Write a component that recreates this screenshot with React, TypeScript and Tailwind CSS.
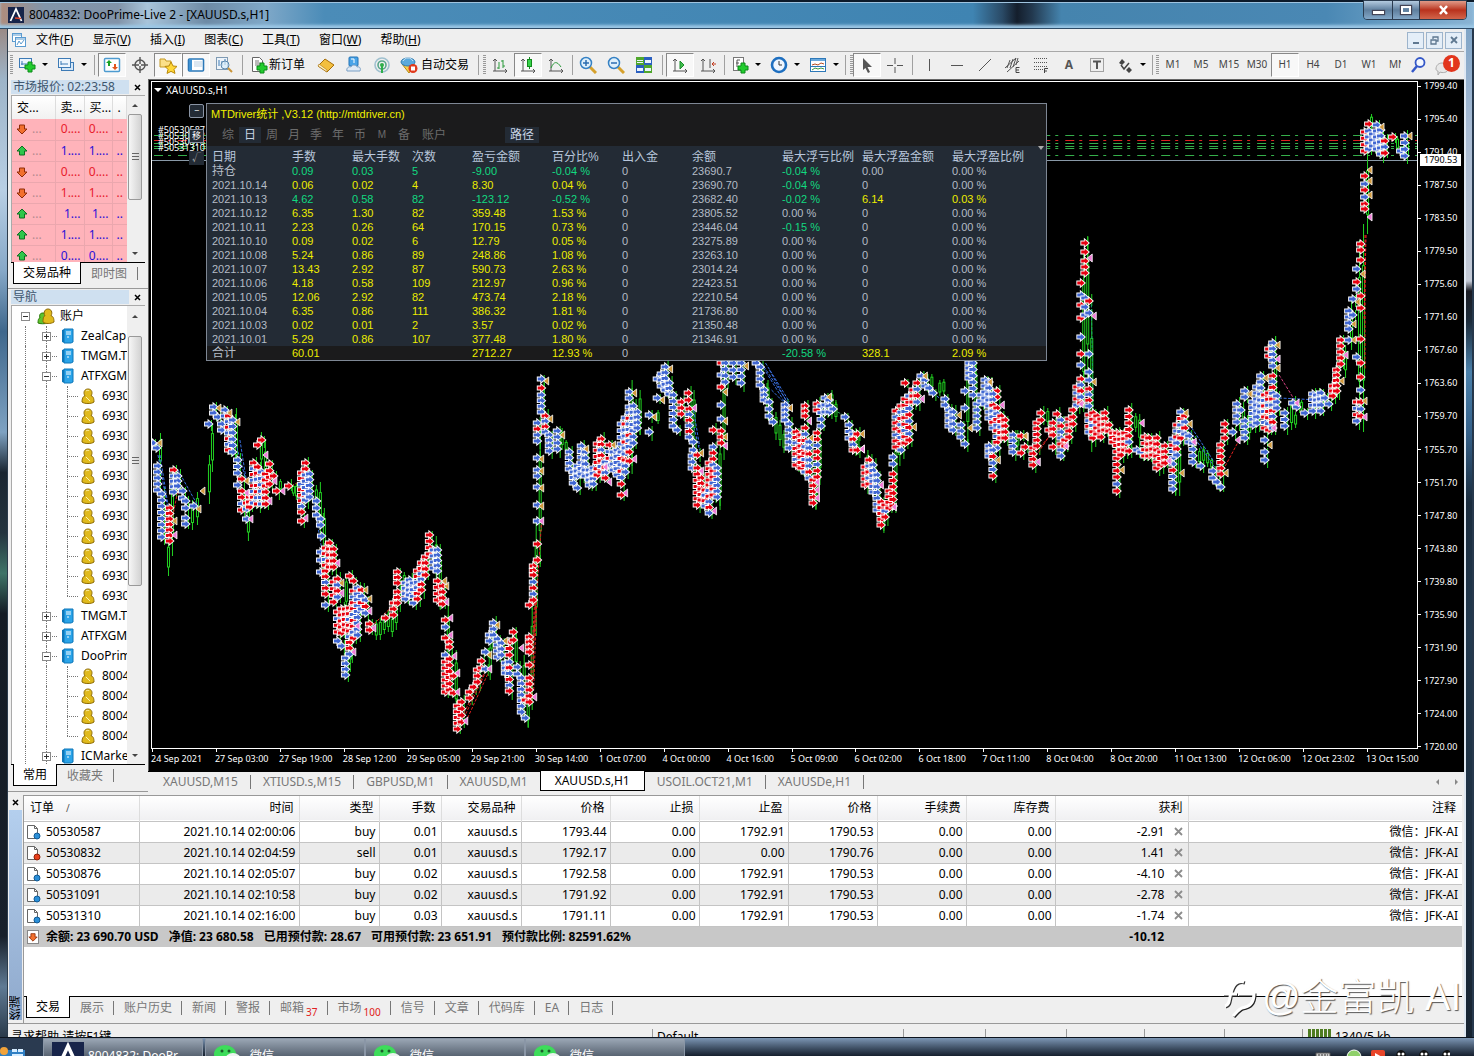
import type { ReactNode } from "react";
import clsx from "clsx";

const UI = "font-['Noto_Sans','Noto_Sans_CJK_SC',sans-serif]";
const ARIAL = "font-['Liberation_Sans','Noto_Sans_CJK_SC',sans-serif]";

/* ---------- data ---------- */

const menus = [
  ["文件", "F"],
  ["显示", "V"],
  ["插入", "I"],
  ["图表", "C"],
  ["工具", "T"],
  ["窗口", "W"],
  ["帮助", "H"],
];

const periods = ["M1", "M5", "M15", "M30", "H1", "H4", "D1", "W1"];

const quotes = [
  { up: false, v: "0....", c: "text-[#e8202c]" },
  { up: true, v: "1....", c: "text-[#2a10d8]" },
  { up: false, v: "0....", c: "text-[#e8202c]" },
  { up: false, v: "1....", c: "text-[#e8202c]" },
  { up: true, v: "1...", c: "text-[#2a10d8]" },
  { up: true, v: "1....", c: "text-[#2a10d8]" },
  { up: true, v: "0....", c: "text-[#2a10d8]" },
];

type Node = { level: 0 | 1 | 2; label: string; open?: boolean; last?: boolean };
const accounts = (label: string, n: number): Node[] =>
  Array.from({ length: n }, (_, i) => ({ level: 2, label, last: i === n - 1 }));

const tree: Node[] = [
  { level: 0, label: "账户", open: true },
  { level: 1, label: "ZealCap" },
  { level: 1, label: "TMGM.T" },
  { level: 1, label: "ATFXGM", open: true },
  ...accounts("6930", 11),
  { level: 1, label: "TMGM.T" },
  { level: 1, label: "ATFXGM" },
  { level: 1, label: "DooPrim", open: true },
  ...accounts("8004", 4),
  { level: 1, label: "ICMarke" },
];

const prices = [
  "1799.40", "1795.40", "1791.40", "1787.50", "1783.50", "1779.50", "1775.60",
  "1771.60", "1767.60", "1763.60", "1759.70", "1755.70", "1751.70", "1747.80",
  "1743.80", "1739.80", "1735.90", "1731.90", "1727.90", "1724.00", "1720.00",
];

const dates = [
  "24 Sep 2021", "27 Sep 03:00", "27 Sep 19:00", "28 Sep 12:00", "29 Sep 05:00",
  "29 Sep 21:00", "30 Sep 14:00", "1 Oct 07:00", "4 Oct 00:00", "4 Oct 16:00",
  "5 Oct 09:00", "6 Oct 02:00", "6 Oct 18:00", "7 Oct 11:00", "8 Oct 04:00",
  "8 Oct 20:00", "11 Oct 13:00", "12 Oct 06:00", "12 Oct 23:02", "13 Oct 15:00",
];

const chartTabs = [
  "XAUUSD,M15", "XTIUSD.s,M15", "GBPUSD,M1", "XAUUSD,M1", "XAUUSD.s,H1", "USOIL.OCT21,M1", "XAUUSDe,H1",
];

const statHead = ["日期", "手数", "最大手数", "次数", "盈亏金额", "百分比%", "出入金", "余额", "最大浮亏比例", "最大浮盈金额", "最大浮盈比例"];
const statRows = [
  ["持仓", "0.09", "0.03", "5", "-9.00", "-0.04 %", "0", "23690.7", "-0.04 %", "0.00", "0.00 %"],
  ["2021.10.14", "0.06", "0.02", "4", "8.30", "0.04 %", "0", "23690.70", "-0.04 %", "0", "0.00 %"],
  ["2021.10.13", "4.62", "0.58", "82", "-123.12", "-0.52 %", "0", "23682.40", "-0.02 %", "6.14", "0.03 %"],
  ["2021.10.12", "6.35", "1.30", "82", "359.48", "1.53 %", "0", "23805.52", "0.00 %", "0", "0.00 %"],
  ["2021.10.11", "2.23", "0.26", "64", "170.15", "0.73 %", "0", "23446.04", "-0.15 %", "0", "0.00 %"],
  ["2021.10.10", "0.09", "0.02", "6", "12.79", "0.05 %", "0", "23275.89", "0.00 %", "0", "0.00 %"],
  ["2021.10.08", "5.24", "0.86", "89", "248.86", "1.08 %", "0", "23263.10", "0.00 %", "0", "0.00 %"],
  ["2021.10.07", "13.43", "2.92", "87", "590.73", "2.63 %", "0", "23014.24", "0.00 %", "0", "0.00 %"],
  ["2021.10.06", "4.18", "0.58", "109", "212.97", "0.96 %", "0", "22423.51", "0.00 %", "0", "0.00 %"],
  ["2021.10.05", "12.06", "2.92", "82", "473.74", "2.18 %", "0", "22210.54", "0.00 %", "0", "0.00 %"],
  ["2021.10.04", "6.35", "0.86", "111", "386.32", "1.81 %", "0", "21736.80", "0.00 %", "0", "0.00 %"],
  ["2021.10.03", "0.02", "0.01", "2", "3.57", "0.02 %", "0", "21350.48", "0.00 %", "0", "0.00 %"],
  ["2021.10.01", "5.29", "0.86", "107", "377.48", "1.80 %", "0", "21346.91", "0.00 %", "0", "0.00 %"],
];
const statTotal = ["合计", "60.01", "", "", "2712.27", "12.93 %", "0", "", "-20.58 %", "328.1", "2.09 %"];

const orderHead = ["时间", "类型", "手数", "交易品种", "价格", "止损", "止盈", "价格", "手续费", "库存费"];
const orders = [
  ["50530587", "2021.10.14 02:00:06", "buy", "0.01", "xauusd.s", "1793.44", "0.00", "1792.91", "1790.53", "0.00", "0.00", "-2.91"],
  ["50530832", "2021.10.14 02:04:59", "sell", "0.01", "xauusd.s", "1792.17", "0.00", "0.00", "1790.76", "0.00", "0.00", "1.41"],
  ["50530876", "2021.10.14 02:05:07", "buy", "0.02", "xauusd.s", "1792.58", "0.00", "1792.91", "1790.53", "0.00", "0.00", "-4.10"],
  ["50531091", "2021.10.14 02:10:58", "buy", "0.02", "xauusd.s", "1791.92", "0.00", "1792.91", "1790.53", "0.00", "0.00", "-2.78"],
  ["50531310", "2021.10.14 02:16:00", "buy", "0.03", "xauusd.s", "1791.11", "0.00", "1792.91", "1790.53", "0.00", "0.00", "-1.74"],
];

const terminalTabs: [string, string?][] = [
  ["交易"], ["展示"], ["账户历史"], ["新闻"], ["警报"], ["邮箱", "37"], ["市场", "100"],
  ["信号"], ["文章"], ["代码库"], ["EA"], ["日志"],
];

/* Order arrows: x, first y, last y, colours cycled down the column. */
type Col = [number, number, number, string];
const cols: Col[] = [
  [153, 443, 443, "b"], [157, 448, 448, "b"], [158, 466, 490, "b"], [162, 494, 537, "b"], [170, 508, 541, "r"],
  [174, 470, 470, "r"], [174, 476, 492, "b"], [178, 476, 486, "b"], [183, 491, 498, "b"], [186, 501, 508, "b"],
  [186, 518, 524, "b"], [194, 506, 506, "b"], [209, 424, 424, "b"], [214, 407, 413, "b"], [218, 417, 417, "b"],
  [222, 424, 430, "b"], [225, 410, 416, "b"], [229, 416, 450, "rb"], [233, 420, 452, "b"], [238, 460, 473, "b"],
  [238, 485, 485, "b"], [242, 479, 479, "r"], [242, 491, 510, "rrb"], [247, 503, 509, "rb"], [247, 519, 519, "b"],
  [250, 497, 507, "r"], [254, 463, 503, "rb"], [258, 445, 445, "r"], [262, 440, 440, "r"], [258, 467, 504, "rrb"],
  [262, 472, 504, "b"], [266, 474, 504, "rrr"], [270, 464, 484, "r"], [274, 476, 476, "r"], [277, 491, 491, "r"],
  [289, 486, 486, "r"], [302, 473, 512, "rrbr"], [302, 521, 521, "r"], [306, 463, 469, "r"], [306, 475, 500, "b"],
  [310, 474, 497, "b"], [317, 501, 515, "b"], [321, 519, 525, "b"], [322, 536, 536, "b"], [321, 552, 560, "b"],
  [321, 572, 572, "b"], [326, 548, 594, "rrbr"], [326, 605, 605, "b"], [330, 543, 567, "r"], [334, 549, 567, "r"],
  [334, 582, 602, "r"], [338, 579, 597, "rb"], [338, 612, 632, "rbr"], [338, 641, 641, "b"], [342, 646, 646, "b"],
  [342, 609, 633, "r"], [346, 609, 630, "r"], [346, 658, 675, "b"], [350, 576, 576, "r"], [350, 608, 654, "rrb"],
  [354, 581, 581, "r"], [354, 591, 638, "rbr"], [358, 588, 635, "b"], [362, 590, 609, "rb"], [366, 600, 613, "br"],
  [370, 624, 630, "r"], [386, 618, 618, "r"], [394, 603, 615, "r"], [398, 572, 583, "r"], [398, 592, 603, "r"],
  [406, 583, 599, "b"], [410, 580, 595, "b"], [414, 583, 603, "b"], [418, 571, 599, "rrbb"], [422, 563, 590, "rrbb"],
  [426, 557, 575, "r"], [430, 535, 554, "r"], [434, 550, 568, "b"], [438, 550, 571, "b"], [438, 581, 600, "r"],
  [443, 586, 604, "r"], [446, 620, 620, "r"], [446, 627, 627, "b"], [446, 638, 638, "r"], [450, 642, 647, "r"],
  [446, 655, 655, "b"], [446, 662, 692, "r"], [450, 659, 690, "rr"], [454, 676, 676, "r"], [454, 693, 693, "r"],
  [458, 706, 729, "r"], [462, 702, 722, "r"], [470, 692, 698, "r"], [474, 687, 687, "r"], [478, 670, 682, "r"],
  [482, 661, 668, "r"], [486, 652, 652, "b"], [486, 669, 669, "b"], [490, 635, 641, "b"], [494, 623, 635, "b"],
  [498, 639, 657, "b"], [502, 643, 655, "b"], [510, 642, 655, "r"], [506, 663, 673, "b"], [510, 662, 691, "br"],
  [514, 632, 640, "r"], [518, 667, 674, "b"], [522, 678, 712, "b"], [526, 700, 700, "r"], [526, 718, 718, "b"],
  [530, 605, 605, "r"], [530, 637, 652, "r"], [530, 665, 665, "r"], [530, 678, 702, "r"], [534, 566, 575, "r"],
  [534, 582, 600, "br"], [538, 544, 544, "r"], [538, 560, 560, "r"], [538, 423, 441, "brb"], [538, 458, 458, "b"],
  [538, 470, 476, "b"], [538, 487, 487, "b"], [538, 505, 505, "b"], [538, 521, 521, "b"], [542, 379, 379, "b"],
  [542, 388, 388, "r"], [542, 395, 412, "b"], [546, 416, 432, "rb"], [550, 435, 451, "b"], [558, 431, 449, "b"],
  [570, 452, 469, "b"], [574, 472, 483, "b"], [578, 488, 488, "b"], [578, 466, 476, "b"], [582, 446, 474, "b"],
  [586, 452, 476, "b"], [590, 470, 485, "b"], [594, 468, 484, "b"], [598, 444, 475, "r"], [602, 439, 472, "rrb"],
  [606, 462, 478, "br"], [610, 445, 465, "rb"], [614, 452, 470, "b"], [618, 450, 475, "b"], [622, 424, 444, "b"],
  [622, 452, 484, "br"], [622, 495, 495, "r"], [626, 418, 472, "brb"], [630, 392, 398, "b"], [630, 407, 452, "bbr"],
  [630, 461, 461, "r"], [634, 406, 443, "b"], [638, 412, 428, "b"], [650, 415, 415, "b"], [650, 432, 432, "b"],
  [658, 379, 379, "b"], [658, 398, 398, "b"], [662, 374, 386, "b"], [666, 367, 390, "b"], [670, 383, 394, "b"],
  [674, 395, 426, "b"], [678, 430, 430, "b"], [682, 402, 414, "r"], [689, 393, 400, "r"], [690, 409, 437, "rb"],
  [694, 442, 450, "b"], [693, 456, 468, "b"], [698, 455, 455, "r"], [698, 468, 505, "rrr"], [702, 478, 500, "r"],
  [706, 490, 506, "rb"], [710, 485, 513, "rb"], [710, 463, 480, "r"], [714, 447, 495, "brr"], [718, 468, 497, "b"],
  [714, 430, 430, "r"], [722, 363, 363, "r"], [722, 375, 375, "b"], [722, 387, 387, "r"], [722, 405, 405, "b"],
  [722, 419, 419, "b"], [722, 431, 443, "r"], [726, 363, 382, "b"], [734, 363, 377, "b"], [742, 363, 383, "b"],
  [757, 363, 363, "b"], [761, 367, 385, "b"], [765, 390, 400, "b"], [770, 402, 416, "b"], [774, 422, 422, "b"],
  [786, 405, 420, "b"], [790, 424, 448, "b"], [797, 432, 465, "rrb"], [802, 435, 468, "r"], [806, 406, 416, "r"],
  [806, 428, 472, "rb"], [810, 442, 478, "bbr"], [814, 480, 503, "r"], [818, 433, 477, "rrb"], [818, 404, 410, "r"],
  [822, 406, 426, "b"], [826, 398, 412, "b"], [830, 400, 412, "b"], [834, 409, 409, "b"], [846, 417, 417, "b"],
  [850, 425, 438, "b"], [854, 434, 450, "br"], [858, 434, 434, "r"], [858, 450, 450, "r"], [866, 467, 485, "r"],
  [870, 460, 484, "rb"], [874, 465, 492, "b"], [878, 475, 510, "b"], [882, 502, 525, "r"], [886, 505, 517, "rb"],
  [890, 491, 508, "r"], [894, 457, 464, "b"], [894, 474, 506, "r"], [897, 411, 447, "rbr"], [902, 406, 450, "rb"],
  [906, 383, 383, "r"], [906, 399, 443, "rrb"], [910, 396, 440, "br"], [914, 390, 402, "r"], [918, 383, 402, "rb"],
  [922, 376, 376, "b"], [926, 380, 386, "b"], [930, 388, 388, "b"], [934, 393, 393, "b"], [946, 399, 405, "b"],
  [950, 410, 426, "b"], [954, 412, 430, "b"], [962, 425, 437, "b"], [966, 444, 444, "b"], [966, 391, 391, "b"],
  [966, 408, 408, "b"], [970, 363, 378, "b"], [974, 363, 395, "b"], [978, 404, 428, "b"], [982, 395, 401, "b"],
  [986, 380, 404, "b"], [990, 382, 418, "b"], [998, 391, 397, "r"], [994, 394, 428, "bbr"], [998, 408, 448, "rb"],
  [1002, 416, 438, "rrb"], [990, 446, 456, "b"], [994, 450, 476, "brb"], [1006, 420, 438, "r"], [1014, 435, 452, "b"],
  [1022, 436, 436, "r"], [1026, 447, 447, "r"], [1022, 453, 453, "r"], [1034, 448, 465, "r"], [1038, 423, 446, "r"],
  [1042, 413, 420, "r"], [1050, 430, 430, "r"], [1054, 423, 435, "r"], [1054, 447, 447, "r"], [1058, 414, 414, "r"],
  [1062, 420, 456, "brb"], [1066, 440, 446, "r"], [1070, 419, 437, "r"], [1074, 410, 424, "r"], [1078, 387, 405, "rb"],
  [1082, 379, 403, "rb"], [1086, 243, 243, "r"], [1086, 252, 252, "r"], [1086, 261, 273, "r"], [1082, 283, 283, "r"],
  [1082, 295, 295, "b"], [1082, 305, 305, "r"], [1082, 318, 318, "r"], [1086, 298, 298, "b"], [1086, 307, 315, "b"],
  [1090, 301, 301, "r"], [1090, 313, 313, "b"], [1082, 337, 337, "b"], [1082, 354, 354, "r"], [1082, 365, 365, "b"],
  [1090, 354, 354, "b"], [1090, 372, 380, "b"], [1090, 389, 406, "rb"], [1090, 415, 432, "rb"], [1094, 413, 438, "rrb"],
  [1098, 416, 434, "r"], [1102, 419, 437, "r"], [1106, 413, 430, "r"], [1110, 425, 431, "r"], [1114, 433, 442, "r"],
  [1118, 433, 477, "r"], [1118, 484, 484, "b"], [1118, 491, 491, "r"], [1122, 434, 455, "r"], [1126, 433, 450, "r"],
  [1130, 410, 436, "r"], [1130, 442, 442, "b"], [1130, 451, 451, "r"], [1138, 450, 450, "b"], [1142, 452, 452, "b"],
  [1146, 437, 456, "r"], [1150, 438, 456, "r"], [1154, 443, 455, "r"], [1158, 438, 468, "r"], [1162, 452, 465, "r"],
  [1166, 446, 463, "r"], [1174, 439, 489, "brbb"], [1178, 425, 455, "rb"], [1182, 412, 438, "brb"], [1186, 416, 434, "rb"],
  [1190, 436, 442, "b"], [1194, 443, 462, "b"], [1202, 466, 466, "b"], [1214, 471, 478, "b"], [1218, 482, 482, "b"],
  [1222, 487, 487, "b"], [1222, 445, 474, "r"], [1226, 424, 438, "r"], [1234, 432, 432, "b"], [1238, 404, 422, "b"],
  [1242, 410, 410, "b"], [1246, 391, 397, "b"], [1246, 421, 438, "b"], [1254, 402, 425, "b"], [1258, 387, 423, "b"],
  [1262, 376, 412, "b"], [1266, 395, 428, "rb"], [1266, 440, 440, "b"], [1266, 452, 460, "b"], [1270, 349, 356, "r"],
  [1270, 393, 430, "rrb"], [1274, 343, 366, "b"], [1274, 376, 428, "rb"], [1278, 396, 408, "b"], [1286, 413, 426, "b"],
  [1294, 403, 403, "b"], [1298, 407, 407, "b"], [1306, 413, 413, "b"], [1314, 394, 411, "b"], [1318, 395, 405, "b"],
  [1322, 393, 411, "b"], [1326, 398, 398, "b"], [1330, 404, 404, "b"], [1334, 386, 396, "r"], [1338, 370, 391, "r"],
  [1342, 340, 364, "r"], [1350, 311, 329, "b"], [1350, 340, 340, "b"], [1354, 299, 299, "b"], [1354, 315, 315, "b"],
  [1358, 269, 269, "b"], [1358, 282, 282, "r"], [1358, 289, 289, "b"], [1358, 357, 357, "b"], [1358, 402, 421, "rb"],
  [1362, 244, 250, "r"], [1362, 260, 260, "r"], [1362, 296, 296, "r"], [1362, 308, 308, "r"], [1362, 339, 339, "r"],
  [1362, 363, 363, "r"], [1362, 377, 377, "r"], [1362, 390, 390, "b"], [1362, 402, 416, "rb"], [1366, 132, 151, "r"],
  [1366, 176, 176, "r"], [1366, 184, 184, "b"], [1366, 190, 190, "r"], [1366, 197, 197, "b"], [1366, 204, 209, "r"],
  [1370, 124, 124, "r"], [1370, 131, 149, "b"], [1374, 134, 146, "b"], [1378, 125, 149, "b"], [1382, 130, 154, "b"],
  [1386, 141, 153, "rb"], [1394, 137, 137, "r"], [1402, 151, 151, "b"], [1406, 136, 156, "b"],
];

/* Exit marks pointing left: gold, then pink. */
const goldExits = [
  [160, 443], [175, 521], [203, 491], [199, 509], [219, 408], [230, 413], [238, 422], [247, 481], [342, 583], [366, 590],
  [370, 599], [447, 586], [445, 581], [498, 625], [490, 655], [506, 641], [547, 381], [551, 419], [542, 459], [542, 471],
  [542, 488], [542, 506], [563, 435], [587, 449], [614, 445], [635, 393], [655, 417], [663, 400], [671, 369], [702, 453],
  [726, 392], [726, 421], [726, 437], [747, 366], [791, 408], [812, 438], [830, 397], [863, 434], [863, 449], [926, 376],
  [915, 427], [960, 415], [971, 428], [991, 382], [999, 460], [1027, 437], [1026, 436], [1095, 382], [1123, 470], [1187, 413],
  [1191, 424], [1183, 473], [1227, 473], [1251, 394], [1267, 378], [1271, 445], [1279, 345], [1279, 368], [1343, 381],
  [1355, 340], [1355, 324], [1366, 401], [1364, 274], [1359, 302], [1371, 170], [1371, 181], [1371, 195], [1383, 127],
  [1411, 136],
];
const pinkExits = [
  [175, 535], [247, 493], [251, 519], [266, 455], [275, 481], [270, 501], [283, 491], [306, 518], [338, 563], [342, 593],
  [354, 652], [358, 626], [370, 611], [374, 628], [447, 602], [451, 618], [451, 635], [455, 656], [458, 673], [458, 692],
  [466, 721], [490, 669], [522, 648], [535, 697], [542, 521], [610, 482], [626, 493], [606, 467], [635, 459], [695, 408],
  [702, 471], [715, 511], [726, 446], [810, 421], [818, 482], [818, 490], [818, 498], [863, 449], [882, 485], [895, 507],
  [923, 399], [1003, 405], [1039, 462], [1067, 446], [1091, 258], [1095, 316], [1082, 404], [1143, 423], [1170, 461],
  [1195, 442], [1239, 440], [1275, 428], [1279, 359], [1298, 403], [1347, 355], [1366, 417], [1371, 217],
];

/* Long bars that show between the arrows: x, high, low. */
const wicks = [
  [160, 433, 470], [168, 540, 576], [172, 470, 556], [192, 500, 530], [197, 492, 525], [209, 455, 504], [212, 424, 472],
  [236, 408, 470], [248, 505, 541], [261, 432, 468], [265, 440, 500], [280, 479, 492], [293, 484, 496], [296, 483, 500],
  [316, 485, 510], [320, 482, 535], [324, 508, 560], [346, 575, 610], [350, 620, 672], [376, 620, 640], [380, 618, 640],
  [384, 616, 634], [388, 610, 632], [392, 615, 637], [396, 600, 630], [404, 572, 590], [436, 536, 580], [440, 548, 610],
  [448, 600, 690], [456, 650, 715], [490, 640, 680], [516, 630, 672], [524, 655, 708], [528, 695, 728], [532, 608, 700],
  [536, 520, 636], [540, 430, 564], [562, 428, 450], [566, 440, 452], [632, 380, 474], [640, 390, 435], [658, 410, 424],
  [694, 390, 440], [720, 440, 510], [724, 360, 460], [768, 380, 420], [776, 412, 440], [780, 420, 446], [784, 430, 453],
  [816, 450, 509], [820, 430, 480], [832, 390, 415], [836, 400, 422], [858, 430, 455], [868, 450, 480], [884, 500, 531],
  [896, 440, 495], [900, 420, 466], [932, 374, 390], [940, 380, 396], [944, 379, 395], [968, 360, 442], [976, 360, 430],
  [1018, 430, 450], [1048, 408, 426], [1084, 250, 412], [1088, 236, 380], [1092, 310, 452], [1130, 406, 450],
  [1136, 413, 432], [1140, 414, 445], [1176, 440, 496], [1180, 440, 496], [1200, 448, 466], [1204, 446, 465],
  [1208, 450, 467], [1212, 458, 470], [1244, 402, 440], [1250, 410, 440], [1276, 336, 430], [1292, 400, 430],
  [1296, 412, 428], [1302, 400, 412], [1338, 360, 398], [1346, 345, 378], [1352, 300, 350], [1360, 240, 428],
  [1364, 224, 432], [1368, 155, 234], [1372, 114, 130], [1398, 136, 152], [1408, 140, 161],
];

/* Dotted trade paths: from, to, colour. */
const paths: [number, number, number, number, string][] = [
  [158, 455, 170, 520, "#3a6fe0"], [160, 455, 168, 505, "#3a6fe0"], [170, 530, 178, 490, "#e02020"],
  [178, 470, 198, 506, "#3a6fe0"], [232, 430, 246, 480, "#3a6fe0"], [240, 440, 246, 478, "#3a6fe0"],
  [302, 480, 288, 488, "#e02020"], [312, 490, 322, 550, "#3a6fe0"], [374, 624, 396, 603, "#e02020"],
  [386, 618, 426, 570, "#e02020"], [458, 725, 486, 670, "#e02020"], [464, 718, 486, 672, "#e02020"],
  [466, 722, 488, 674, "#e02020"], [530, 700, 535, 600, "#e02020"], [532, 700, 536, 600, "#e02020"],
  [534, 690, 537, 600, "#e02020"], [534, 640, 542, 520, "#e02020"],
  [762, 363, 790, 405, "#3a6fe0"], [766, 363, 790, 402, "#3a6fe0"], [770, 370, 790, 407, "#3a6fe0"],
  [764, 368, 790, 410, "#3a6fe0"], [772, 390, 788, 406, "#3a6fe0"],
  [690, 410, 700, 450, "#3a6fe0"], [694, 410, 700, 446, "#3a6fe0"], [834, 410, 848, 417, "#2fa060"],
  [934, 393, 960, 415, "#3a6fe0"], [1034, 460, 1054, 430, "#e02020"], [1038, 450, 1056, 430, "#e02020"],
  [1092, 300, 1094, 410, "#1aa070"], [1190, 424, 1215, 462, "#3a6fe0"], [1186, 424, 1216, 468, "#3a6fe0"],
  [1224, 470, 1240, 440, "#e02020"], [1280, 375, 1298, 404, "#d04080"], [1280, 398, 1320, 400, "#3a6fe0"],
  [1366, 235, 1366, 370, "#f02020"], [1367, 235, 1365, 320, "#f02020"],
];

const levels: [number, string][] = [
  [135, "#35b04a"], [140, "#e02020"], [143, "#35b04a"], [146, "#35b04a"], [148, "#35b04a"], [155, "#35b04a"],
];

/* ---------- icons ---------- */

function Icon({ children, size = 18 }: { children: ReactNode; size?: number }) {
  return (
    <svg width={size} height={size} viewBox="0 0 18 18" fill="none" aria-hidden="true" className="shrink-0">
      {children}
    </svg>
  );
}

const Plus = ({ x = 11, y = 11 }) => (
  <path d={`M${x - 2} ${y - 5}h4v3h3v4h-3v3h-4v-3h-3v-4h3z`} fill="#22cc2e" stroke="#0b8a18" />
);
const Axes = () => <path d="M4 3v12M2 15h14M2 5l2-2 2 2M14 13l2 2-2 2" stroke="#555" />;

const icons = {
  newChart: <><rect x="1.500" y="2.500" width="12" height="9" fill="#eaf4fd" stroke="#3d7ab5" /><path d="M4 5v4M3 8h8" stroke="#3d7ab5" /><Plus x={12} /></>,
  profiles: <><rect x="4.500" y="6.500" width="12" height="8" fill="#d5e7f7" stroke="#3d7ab5" /><rect x="1.500" y="2.500" width="12" height="9" fill="#eef6fd" stroke="#3d7ab5" /><path d="M4 5v4M4 8h7" stroke="#3d7ab5" /></>,
  market: <><rect x="1.500" y="2.500" width="15" height="13" rx="1" fill="#fff" stroke="#4d9bd0" strokeWidth="1.500" /><path d="M6 4l3 3H7v3H5V7H3z" fill="#17a326" /><path d="M12 14l-3-3h2V8h2v3h2z" fill="#e2541b" /></>,
  crosshair: <><circle cx="9" cy="9" r="5" stroke="#555" strokeWidth="1.400" /><path d="M9 1v7M9 10v7M1 9h7M10 9h7" stroke="#555" strokeWidth="1.400" /></>,
  navigator: <><path d="M1 3h5l1 2h5v6H1z" fill="#fbe08a" stroke="#c59a24" /><path d="M12 6l2 4 4 .4-3 3 1 4-4-2-4 2 1-4-3-3 4-.4z" fill="#ffd83a" stroke="#b98708" /></>,
  terminal: <><rect x="1.500" y="3" width="15" height="12" rx="1" fill="#fff" stroke="#2b78b8" strokeWidth="1.600" /><path d="M2 3h3v12H2z" fill="#3f92d2" /><path d="M7 6h8M7 8h8M7 10h8" stroke="#b9cfe2" /></>,
  tester: <><rect x="1.500" y="1.500" width="11" height="12" fill="#eef4fa" stroke="#7f9ab3" /><path d="M4 4v6M7 5v5M10 3v6" stroke="#3d7ab5" /><circle cx="10" cy="9" r="4" fill="#d9ecfa" fillOpacity=".7" stroke="#5a87ad" /><path d="M13 12l4 4" stroke="#c99437" strokeWidth="2" /></>,
  order: <><path d="M2.500 1.500h7l3 3v11h-10z" fill="#fff" stroke="#666" /><path d="M5 5h4M5 7h5M5 9h5" stroke="#777" /><Plus x={12} y={12} /></>,
  editor: <><path d="M1 10l7-7 9 6-7 7z" fill="#f3bf3e" stroke="#a66e0a" /><path d="M1 10l9 6v-2L2 8z" fill="#fff3c9" stroke="#a66e0a" strokeWidth=".6" /></>,
  vps: <><rect x="4" y="1" width="9" height="9" rx="1" fill="#49a4e8" stroke="#2272b5" /><path d="M6 3h3v4" stroke="#fff" /><path d="M2 15c-1-3 2-5 4-4 1-3 6-2 6 0 3-1 4 2 3 4z" fill="#dfeaf5" stroke="#7aa0c5" /></>,
  signals: <><circle cx="9" cy="9" r="7" stroke="#9fc0cf" strokeWidth="1.600" /><circle cx="9" cy="9" r="4" stroke="#58a58b" strokeWidth="1.600" /><circle cx="9" cy="9" r="2" fill="#2fae4a" /><path d="M9 9v8" stroke="#2fae4a" strokeWidth="2" /></>,
  auto: <><path d="M2 8l7 9 6-8z" fill="#f6cf4b" stroke="#b48712" /><ellipse cx="8" cy="6" rx="7" ry="4" fill="#5aa9dc" stroke="#2f7bb0" /><path d="M3 5c2-4 8-4 10 0" stroke="#cfe8f8" /><circle cx="13" cy="12.500" r="4.500" fill="#e03a1c" /><rect x="11" y="10.500" width="4" height="4" fill="#fff" /></>,
  bars: <><Axes /><path d="M8 6v7M6 12h2M12 4v8M10 5h2M12 10h2" stroke="#2b9a3a" /></>,
  candles: <><Axes /><path d="M10.500 1v12" stroke="#128a1d" /><rect x="8.500" y="3.500" width="4" height="7" fill="#37d24a" stroke="#128a1d" /></>,
  line: <><Axes /><path d="M4 12c3-7 6-7 10-1" stroke="#2b9a3a" /></>,
  zoomIn: <><path d="M11 11l6 6" stroke="#d6a12c" strokeWidth="3" /><circle cx="7" cy="7" r="5.500" fill="#dff0fb" stroke="#3581c4" strokeWidth="1.500" /><path d="M4 7h6M7 4v6" stroke="#2b6cb0" strokeWidth="1.500" /></>,
  zoomOut: <><path d="M11 11l6 6" stroke="#d6a12c" strokeWidth="3" /><circle cx="7" cy="7" r="5.500" fill="#dff0fb" stroke="#3581c4" strokeWidth="1.500" /><path d="M4 7h6" stroke="#2b6cb0" strokeWidth="1.500" /></>,
  tile: <><path d="M1 1h8v8H1zM9 9h8v8H9z" fill="#4fa72c" /><path d="M9 1h8v8H9zM1 9h8v8H1z" fill="#2a5fc0" /><path d="M2 4h6v1H2zM2 6h6v1H2zM10 4h6v3h-6zM2 12h6v3H2zM10 12h6v3h-6z" fill="#e9f3ff" /></>,
  scroll: <><Axes /><path d="M9 5l4 4-4 4z" fill="#3fbf4c" stroke="#1b8a2a" /></>,
  shift: <><Axes /><path d="M11 3v9" stroke="#555" /><path d="M17 8h-4M15 6l-2 2 2 2" stroke="#c23b1e" /></>,
  indicators: <><rect x="2.500" y="1.500" width="10" height="13" fill="#fff" stroke="#777" /><path d="M9 4H6v7M5 7h3" stroke="#555" /><Plus x={12} y={12} /></>,
  clock: <><circle cx="9" cy="9" r="7" fill="#eef6ff" stroke="#1e6fc0" strokeWidth="2.600" /><path d="M9 5v4h3" stroke="#333" /></>,
  template: <><rect x="1.500" y="2.500" width="15" height="13" fill="#fff" stroke="#2d78b8" /><path d="M2 4h14" stroke="#69a8dc" strokeWidth="2" /><path d="M3 9l3-1 3 1 3-2 3 1" stroke="#b34a20" /><path d="M2 10.500h14" stroke="#2d78b8" /><path d="M3 14l3-2 3 1 3-1 3 1" stroke="#3c9a47" /></>,
  cursor: <path d="M5 2l9 9H9.500l2.500 5-2 1-2.500-5L5 14z" fill="#555" />,
  cross: <path d="M9 2v6M9 11v6M1 9.500h6M11 9.500h6" stroke="#555" />,
  vline: <path d="M9.500 3v12" stroke="#555" />,
  hline: <path d="M3 9.500h12" stroke="#555" />,
  trend: <path d="M3 15L15 3" stroke="#555" />,
  channel: <><path d="M1 12L12 2M3 16L15 5M3 12l3-8M6 12l3-9M9 11l3-9M12 9l2-7" stroke="#555" /><path d="M15.500 11.500H12v5h3.500M12 14h3" stroke="#444" /></>,
  fibo: <><path d="M2 2.500h14M2 6.500h14M2 10.500h14" stroke="#555" strokeDasharray="1 1" /><path d="M2 13.500h9" stroke="#555" strokeDasharray="1 1" /><path d="M16 12.500h-3.500V17M12 15h3" stroke="#444" /></>,
  label: <><rect x="2.500" y="2.500" width="13" height="13" stroke="#555" strokeDasharray="1 1" /><path d="M5 5.500h8M9 5v8" stroke="#555" strokeWidth="2" /></>,
  arrows: <><path d="M3 7l3-4 3 3-3 3zM10 14l3-3 3 3-3 3z" fill="#444" /><path d="M5 9l3 4 5-6" stroke="#444" strokeWidth="1.500" /></>,
  search: <><circle cx="11" cy="6.500" r="4.500" fill="#f4f8ff" stroke="#3558c8" strokeWidth="1.800" /><path d="M8 10l-5 6" stroke="#3558c8" strokeWidth="2.500" /></>,
};

function DirArrow({ up }: { up: boolean }) {
  return (
    <svg width="12" height="12" viewBox="0 0 12 12" aria-hidden="true">
      <path
        d={up ? "M6 1l5 5H8.500v4h-5V6H1z" : "M6 11L1 6h2.500V2h5v4H11z"}
        fill={up ? "#2fc64a" : "#f2702e"}
        stroke={up ? "#0f6f22" : "#8f2c08"}
      />
    </svg>
  );
}

const Person = () => (
  <svg width="14" height="16" viewBox="0 0 14 16" aria-hidden="true">
    <path d="M1 14c0-5 2-6 3-6-2-3-1-7 3-7s5 4 3 7c2 0 3 2 3 6-2 2-10 2-12 0z" fill="#e0ba1c" stroke="#8d6b06" />
    <path d="M5 3c1-1 3-1 3 0M5 9l4 4" stroke="#fff3a8" fill="none" />
  </svg>
);

const Server = () => (
  <svg width="13" height="16" viewBox="0 0 13 16" aria-hidden="true">
    <path d="M1 2l3-1v14l-3-1z" fill="#0f76b8" />
    <path d="M3 1h9v13l-2 1H3z" fill="#2aa3e8" stroke="#0f76b8" />
    <path d="M5 4h5M5 6h5M6 9h2" stroke="#fff" />
  </svg>
);

const People = () => (
  <svg width="18" height="17" viewBox="0 0 18 17" aria-hidden="true">
    <path d="M1 15c0-4 1-5 2-5-1-3 0-5 3-5s4 2 3 5c1 0 2 2 2 5-3 1-8 1-10 0z" fill="#5fc32c" stroke="#2c7a0c" />
    <path d="M6 14c0-5 1-6 2-6-2-4 0-7 3-7s5 3 3 7c2 0 3 2 3 6-3 2-9 2-11 0z" fill="#e0ba1c" stroke="#8d6b06" />
  </svg>
);

const ALogo = ({ size }: { size: number }) => (
  <svg width={size} height={size} viewBox="0 0 16 16" aria-hidden="true" className="shrink-0">
    <path d="M0 0h16v16H0z" fill="#17244a" />
    <path d="M2.500 14L8 2l5.500 12" stroke="#fff" strokeWidth="1.800" fill="none" />
    <path d="M7 11l6 .5" stroke="#e0452c" strokeWidth="1.500" />
  </svg>
);

const WeChat = () => (
  <svg width="28" height="24" viewBox="0 0 28 24" aria-hidden="true" className="shrink-0">
    <ellipse cx="11" cy="10" rx="11" ry="9" fill="#3ddc5a" />
    <circle cx="8" cy="7" r="1.500" fill="#1c5c2a" />
    <circle cx="15" cy="7" r="1.500" fill="#1c5c2a" />
    <ellipse cx="19" cy="16" rx="8" ry="7" fill="#eef3f0" />
  </svg>
);

/* ---------- toolbar ---------- */

function Tool({ name, pressed, drop }: { name: keyof typeof icons; pressed?: boolean; drop?: boolean }) {
  return (
    <button
      type="button"
      aria-label={name}
      className={clsx(
        "flex h-6 shrink-0 items-center",
        drop ? "w-[39px] pl-[5px]" : "w-7 justify-center",
        pressed && "border border-[#fff] border-t-[#888] border-l-[#888] bg-[#f8f8f8]",
      )}
    >
      <Icon>{icons[name]}</Icon>
      {drop && <span className="ml-[6px] h-0 w-0 border-x-[3px] border-t-[3px] border-x-transparent border-t-black" />}
    </button>
  );
}

const Sep = ({ className }: { className: string }) => (
  <span className={clsx("flex h-5 shrink-0 justify-center", className)}>
    <span className="w-px bg-[#a0a0a0]" />
  </span>
);

const Grip = ({ className }: { className?: string }) => (
  <span className={clsx("flex h-6 shrink-0 items-center justify-end", className)}>
    <span className="h-5 w-[3px] bg-[repeating-linear-gradient(#9a9a9a_0_1px,transparent_1px_2px)]" />
  </span>
);

function Toolbar() {
  return (
    <div className="flex h-7 items-center overflow-hidden border-t border-[#a8a8a8] bg-[#efefef] pb-[2px] pl-[2px] text-xs">
      <Grip className="w-[3px]" />
      <Tool name="newChart" drop />
      <Tool name="profiles" drop />
      <Sep className="w-[7px]" />
      <Tool name="market" pressed />
      <Tool name="crosshair" />
      <Tool name="navigator" pressed />
      <Tool name="terminal" pressed />
      <Tool name="tester" />
      <Sep className="w-2" />
      <button type="button" className="flex h-6 w-[66px] shrink-0 items-center gap-px pl-1 whitespace-nowrap">
        <Icon>{icons.order}</Icon>新订单
      </button>
      <Tool name="editor" />
      <Tool name="vps" />
      <Tool name="signals" />
      <button type="button" className="flex h-6 w-[78px] shrink-0 items-center gap-[3px] pl-1 whitespace-nowrap">
        <Icon>{icons.auto}</Icon>自动交易
      </button>
      <Sep className="w-2" />
      <Grip className="w-1" />
      <Tool name="bars" />
      <Tool name="candles" pressed />
      <Tool name="line" />
      <Sep className="w-1" />
      <Tool name="zoomIn" />
      <Tool name="zoomOut" />
      <Tool name="tile" />
      <Sep className="w-2" />
      <Tool name="scroll" pressed />
      <Tool name="shift" />
      <Sep className="w-1" />
      <Tool name="indicators" drop />
      <Tool name="clock" drop />
      <Tool name="template" drop />
      <Sep className="w-1" />
      <Grip className="w-[6px]" />
      <Tool name="cursor" pressed />
      <Tool name="cross" />
      <Sep className="w-[6px]" />
      <Tool name="vline" />
      <Tool name="hline" />
      <Tool name="trend" />
      <Tool name="channel" />
      <Tool name="fibo" />
      <button type="button" className="h-6 w-7 shrink-0 text-center font-bold text-[#555]">A</button>
      <Tool name="label" />
      <Tool name="arrows" drop />
      <Sep className="w-1" />
      <Grip className="w-[5px]" />
      {periods.map((p) => (
        <button
          key={p}
          type="button"
          className={clsx(
            "h-6 w-7 shrink-0 text-center text-[10px] text-[#444]",
            p === "H1" && "border border-white border-t-[#888] border-l-[#888] bg-[#f8f8f8]",
          )}
        >
          {p}
        </button>
      ))}
      <button type="button" className="h-6 w-[18px] shrink-0 overflow-hidden pl-[6px] text-left text-[10px] text-[#444]">MN</button>
      <span className="flex-1" />
      <Tool name="search" />
      <button type="button" aria-label="messages" className="relative mr-1 h-6 w-7 shrink-0">
        <svg width="28" height="24" viewBox="0 0 28 24" aria-hidden="true">
          <path d="M4 16c0-8 12-8 12 0 0 4-6 4-8 3l-2 3v-4c-1 0-2-1-2-2z" fill="#e8e8e8" stroke="#aaa" />
        </svg>
        <span className="absolute top-[2px] right-0 flex h-[17px] w-[17px] items-center justify-center rounded-full bg-[#e2351c] text-xs font-bold text-white">
          1
        </span>
      </button>
    </div>
  );
}

/* ---------- left column ---------- */

function PanelTitle({ children }: { children: ReactNode }) {
  return (
    <div className="mx-[3px] flex h-4 items-center justify-between text-xs leading-4 text-[#3e566e]">
      <span className="h-[14px] flex-1 bg-[#cfe0f0] pl-[2px] leading-[14px] whitespace-nowrap">{children}</span>
      <button type="button" aria-label="close" className="flex w-4 justify-center">
        <svg width="7" height="7" viewBox="0 0 7 7" aria-hidden="true"><path d="M1 1l5 5M6 1L1 6" stroke="#000" strokeWidth="1.500" /></svg>
      </button>
    </div>
  );
}

function ScrollBar({ pre, thumb }: { pre: string; thumb: string }) {
  return (
    <div className="flex w-[18px] shrink-0 flex-col items-center bg-[#efefef] pr-[2px]">
      <span className={clsx("flex shrink-0 items-center", pre)}>
        <span className="h-0 w-0 border-x-[3px] border-b-[3px] border-x-transparent border-b-[#444]" />
      </span>
      <span className={clsx("flex w-[14px] shrink-0 items-center justify-center rounded-xs border border-[#999] bg-linear-to-r from-[#f6f6f6] to-[#d2d2d2]", thumb)}>
        <span className="h-2 w-[7px] bg-[repeating-linear-gradient(#666_0_1px,transparent_1px_3px)]" />
      </span>
      <span className="mt-auto mb-[7px] h-0 w-0 border-x-[3px] border-t-[3px] border-x-transparent border-t-[#444]" />
    </div>
  );
}

function PanelTabs({ active, other }: { active: string; other: string }) {
  return (
    <div className="mx-[3px] flex h-[22px] shrink-0 border-t border-black text-xs">
      <button type="button" className="ml-[2px] h-[22px] -translate-y-px border border-t-0 border-black bg-white px-[9px]">{active}</button>
      <button type="button" className="px-[10px] text-[#777]">{other}</button>
      <span className="my-1 w-px bg-[#777]" />
    </div>
  );
}

function TreeRow({ node }: { node: Node }) {
  const box = (
    <span className="relative z-10 flex h-[9px] w-[9px] items-center justify-center border border-[#8a8a8a] bg-white">
      <span className="absolute h-px w-[5px] bg-[#333]" />
      {!node.open && <span className="absolute h-[5px] w-px bg-[#333]" />}
    </span>
  );
  return (
    <li className="flex h-5 items-center text-xs whitespace-nowrap">
      <span className={clsx("flex w-[21px] shrink-0 items-center justify-center", node.level > 0 && "h-full")}>
        {node.level > 0 ? <span className="h-full border-l border-dotted border-[#777]" /> : box}
      </span>
      {node.level > 0 && (
        <span className="relative flex h-full w-[21px] shrink-0 items-center justify-center">
          <span className="absolute inset-y-0 left-[10px] border-l border-dotted border-[#777]" />
          {node.level === 1 && <span className="absolute right-0 left-[10px] border-t border-dotted border-[#777]" />}
          {node.level === 1 && box}
        </span>
      )}
      {node.level === 2 && (
        <span className="relative h-full w-[21px] shrink-0">
          <span className={clsx("absolute top-0 left-[10px] border-l border-dotted border-[#777]", node.last ? "h-1/2" : "h-full")} />
          <span className="absolute top-1/2 right-0 left-[10px] border-t border-dotted border-[#777]" />
        </span>
      )}
      <span className="flex w-5 shrink-0 justify-center">
        {node.level === 0 ? <People /> : node.level === 1 ? <Server /> : <Person />}
      </span>
      <span className="pl-1">{node.label}</span>
    </li>
  );
}

function LeftColumn() {
  return (
    <div className="flex w-[140px] shrink-0 flex-col bg-[#efefef]">
      <PanelTitle>市场报价: 02:23:58</PanelTitle>
      <div className="mx-[3px] flex h-[167px] shrink-0 overflow-hidden border-t border-l border-[#aaa] bg-white">
        <div className="flex-1 overflow-hidden">
          <table className="w-full table-fixed border-collapse text-xs">
            <colgroup>
              <col className="w-[43px]" />
              <col className="w-[29px]" />
              <col className="w-[28px]" />
              <col />
            </colgroup>
            <thead>
              <tr className="h-[23px] bg-linear-to-b from-white to-[#f1f1f1]">
                {["交...", "卖...", "买...", "."].map((h) => (
                  <th key={h} className="overflow-hidden border-r border-[#ddd] pl-[5px] text-left font-normal whitespace-nowrap">{h}</th>
                ))}
              </tr>
            </thead>
            <tbody>
              {quotes.map((q, i) => (
                <tr key={i} className="h-[21px] border-b border-[#eba7ae] bg-[#ffb3ba]">
                  <td className="border-r border-[#eba7ae] pl-1">
                    <span className="flex items-center gap-1 text-[#b58a90]"><DirArrow up={q.up} />...</span>
                  </td>
                  <td className={clsx("border-r border-[#eba7ae] pr-[3px] text-right", q.c)}>{q.v}</td>
                  <td className={clsx("border-r border-[#eba7ae] pr-[3px] text-right", q.c)}>{q.v}</td>
                  <td className={clsx("pl-1", q.c)}>..</td>
                </tr>
              ))}
            </tbody>
          </table>
        </div>
        <ScrollBar pre="h-[18px]" thumb="h-[86px]" />
      </div>
      <PanelTabs active="交易品种" other="即时图" />
      <div className="mt-1 border-t border-[#999]">
        <PanelTitle>导航</PanelTitle>
      </div>
      <div className="mx-[3px] flex min-h-0 flex-1 overflow-hidden border-t border-l border-[#aaa] bg-white">
        <ul className="min-h-0 flex-1 overflow-hidden pl-[3px]">
          {tree.map((n, i) => <TreeRow key={i} node={n} />)}
        </ul>
        <ScrollBar pre="h-[30px] pb-[10px]" thumb="h-[250px]" />
      </div>
      <PanelTabs active="常用" other="收藏夹" />
      <div className="mb-[3px] h-[6px] shrink-0 border-b border-[#999]" />
    </div>
  );
}

/* ---------- chart ---------- */

const ARROW = "M-4-1.500h3.500v-1.800l3.800 3.300l-3.800 3.300v-1.800h-3.500z";

function Plot() {
  return (
    <svg viewBox="152 82 1266 666" preserveAspectRatio="none" className="absolute inset-0 h-full w-full" aria-hidden="true">
      {levels.map(([y, c]) => (
        <path key={y} d={`M152 ${y + 0.5}H1418`} stroke={c} strokeDasharray="9 5 3 7" strokeDashoffset="-2" />
      ))}
      <path d="M152 160.500H1418" stroke="#8a9aa8" />
      {cols.map(([x, a, b], i) => (
        <path key={i} d={`M${x + 2.5} ${a - 4 - (i % 4)}V${b + 5 + (i % 5)}`} stroke="#22d322" />
      ))}
      {wicks.map(([x, a, b]) => (
        <g key={x} stroke="#22d322">
          <path d={`M${x + 0.5} ${a}V${b}`} />
          <rect x={x - 0.5} y={a + (b - a) * 0.2} width="2" height={(b - a) * 0.55} fill="#000" />
        </g>
      ))}
      {paths.map(([x1, y1, x2, y2, c], i) => (
        <path key={i} d={`M${x1} ${y1}L${x2} ${y2}`} stroke={c} strokeDasharray="3 1.500" />
      ))}
      {cols.map(([x, a, b, pattern], i) => {
        const n = Math.round((b - a) / 6) + 1;
        return Array.from({ length: n }, (_, k) => (
          <path
            key={`${i}-${k}`}
            d={ARROW}
            transform={`translate(${x} ${n > 1 ? a + ((b - a) * k) / (n - 1) : a})`}
            fill={pattern[k % pattern.length] === "b" ? "#3f66d2" : "#e6000f"}
            stroke="#fff"
            strokeWidth="1.800"
            paintOrder="stroke"
          />
        ));
      })}
      {goldExits.map(([x, y], i) => (
        <path key={i} d={`M${x - 3} ${y}l5-4v8z`} fill="#d29a3c" stroke="#fff" strokeWidth=".8" />
      ))}
      {pinkExits.map(([x, y], i) => (
        <path key={i} d={`M${x - 3} ${y}l5-4v8z`} fill="#f07ad8" stroke="#fff" strokeWidth=".8" />
      ))}
    </svg>
  );
}

const GREEN = "text-[#12d980]";
const YELLOW = "text-[#ecec00]";
const GREY = "text-[#b4bcc6]";

function statColour(row: string[], i: number) {
  if (i === 0 || i === 6 || i === 7) return GREY;
  if (i >= 8) {
    const v = parseFloat(row[i]);
    return v < 0 ? GREEN : v > 0 ? YELLOW : GREY;
  }
  return row[4].startsWith("-") ? GREEN : YELLOW;
}

function StatsPanel() {
  return (
    <section className={clsx("absolute top-[21px] left-[54px] w-[841px] border border-[#7e8794] bg-[#1b1b1c] text-[11px]", ARIAL)}>
      <h2 className="flex h-5 items-center pl-1 text-[#f0f000]">MTDriver统计 ,V3.12 (http://mtdriver.cn)</h2>
      <div className="flex h-[22px] items-center pl-[10px] text-xs text-[#6c6c6c]">
        {["综", "日", "周", "月", "季", "年", "币", "M", "备"].map((t) => (
          <button key={t} type="button" className={clsx("w-[22px] leading-4", t === "日" && "bg-[#232b35] text-[#c8d4e4]", t === "M" && "text-[10px]")}>{t}</button>
        ))}
        <button type="button" className="w-[38px] leading-4">账户</button>
        <button type="button" className="ml-[52px] w-[34px] bg-[#232b35] leading-4 text-[#c8d4e4]">路径</button>
      </div>
      <div className="bg-[#232b35] pt-1">
        <table className="w-full table-fixed border-collapse leading-[14px] whitespace-nowrap">
          <colgroup>
            <col className="w-[85px]" />
            <col className="w-[60px]" />
            <col className="w-[60px]" />
            <col className="w-[60px]" />
            <col className="w-[80px]" />
            <col className="w-[70px]" />
            <col className="w-[70px]" />
            <col className="w-[90px]" />
            <col className="w-[80px]" />
            <col className="w-[90px]" />
            <col />
          </colgroup>
          <thead>
            <tr className="h-[14px] text-xs leading-[14px] text-[#b8c6da]">
              {statHead.map((h, i) => <th key={h} className={clsx("text-left font-normal", i === 0 && "pl-[5px]")}>{h}</th>)}
            </tr>
          </thead>
          <tbody>
            {statRows.map((r) => (
              <tr key={r[0]} className="h-[14px]">
                {r.map((v, i) => <td key={i} className={clsx(statColour(r, i), i === 0 && "pl-[5px]", v === "持仓" && "text-xs leading-[14px]")}>{v}</td>)}
              </tr>
            ))}
          </tbody>
          <tfoot>
            <tr className="h-[14px] bg-[#1b1b1c]">
              {statTotal.map((v, i) => <td key={i} className={clsx(statColour(statTotal, i), i === 0 && "pl-[5px] text-xs leading-[14px]")}>{v}</td>)}
            </tr>
          </tfoot>
        </table>
      </div>
    </section>
  );
}

function Chart() {
  const tool = "absolute left-[37px] h-[14px] w-[15px] border bg-[#232b35] leading-3";
  return (
    <div className="flex min-w-0 flex-1 flex-col">
      <div className="flex min-h-0 flex-1 border-t border-l border-[#666] bg-black pt-px pl-[2px] text-[9px] leading-[10px] text-white">
        <div className="flex min-w-0 flex-1 flex-col">
          <div className="relative min-h-0 flex-1 border border-white">
            <Plot />
            <div className="absolute top-[3px] left-[2px] flex items-center gap-1 text-[10px]">
              <span className="h-0 w-0 border-x-4 border-t-4 border-x-transparent border-t-white" />
              XAUUSD.s,H1
            </div>
            <div className="absolute top-[45px] left-[6px] leading-[6px]">
              <p>#50530587</p>
              <p>#50530832</p>
              <p>#50530876</p>
              <p>#50531310</p>
            </div>
            <button type="button" className={clsx(tool, "top-[22px] rounded-xs border-[#8a94a4] text-white")}>−</button>
            <button type="button" className={clsx(tool, "top-[47px] border-[#8a94a4] text-white")}>移</button>
            <button type="button" className={clsx(tool, "top-[69px] border-[#232b35] text-[#aaa]")}>√</button>
            <StatsPanel />
            <span className="absolute top-[64px] left-[886px] h-0 w-0 border-x-[3px] border-t-4 border-x-transparent border-t-[#aaa]" />
          </div>
          <div className="-mr-[12px] grid h-[22px] grid-cols-20">
            {dates.map((d) => (
              <div key={d} className="relative pt-[5px] whitespace-nowrap before:absolute before:top-0 before:left-px before:h-[3px] before:w-px before:bg-white">{d}</div>
            ))}
          </div>
        </div>
        <ul className="relative mb-[19px] flex w-[46px] shrink-0 flex-col justify-between">
          {prices.map((p) => (
            <li key={p} className="flex h-[10px] items-center gap-[3px] before:h-px before:w-[3px] before:bg-white">{p}</li>
          ))}
          <li className="absolute top-[73px] left-[2px] flex h-3 w-[41px] items-center bg-white pl-1 text-black">1790.53</li>
        </ul>
      </div>
      <div className="flex h-6 border-t border-black bg-[#efefef] pl-[3px] text-xs text-[#777]">
        {chartTabs.map((t, i) => (
          <div key={t} className="flex h-5">
            <button
              type="button"
              className={clsx(
                "whitespace-nowrap",
                i === 4 ? "-translate-y-px border border-t-0 border-black bg-white px-[14px] text-black" : "px-3",
              )}
            >
              {t}
            </button>
            {i !== 3 && i !== 4 && <span className="my-[3px] w-px bg-[#777]" />}
          </div>
        ))}
        <span className="mr-[6px] ml-auto flex h-[19px] items-center gap-4">
          <span className="h-0 w-0 border-y-[3px] border-r-[3px] border-y-transparent border-r-[#888]" />
          <span className="h-0 w-0 border-y-[3px] border-l-[3px] border-y-transparent border-l-[#888]" />
        </span>
      </div>
    </div>
  );
}

/* ---------- terminal ---------- */

function OrderIcon({ sell }: { sell: boolean }) {
  return (
    <svg width="15" height="16" viewBox="0 0 15 16" aria-hidden="true" className="shrink-0">
      <path d="M1.500 1.500h7l3 3v10h-10z" fill="#fff" stroke="#666" />
      <path d="M8.500 1.500v3h3" fill="none" stroke="#666" />
      <circle cx="11" cy="12" r="3" fill={sell ? "#e8401c" : "#2a8fd8"} stroke={sell ? "#8f2008" : "#125a94"} />
    </svg>
  );
}

function Terminal() {
  const th = "border-r border-[#ddd] pr-[5px] text-right font-normal";
  const td = "border-r border-[#c4c4c4] pr-[3px] text-right";
  return (
    <section className="relative flex h-[229px] shrink-0 border-b border-[#999] bg-[#efefef] pr-[2px]">
      <div className="flex w-[15px] shrink-0 flex-col items-center">
        <button type="button" aria-label="close terminal" className="flex h-[15px] w-full items-center justify-center">
          <svg width="7" height="7" viewBox="0 0 7 7" aria-hidden="true"><path d="M1 1l5 5M6 1L1 6" stroke="#000" strokeWidth="1.500" /></svg>
        </button>
        <span className="mb-[3px] flex w-[13px] flex-1 rotate-180 items-center overflow-hidden bg-linear-to-t from-[#b4cfee] to-[#8fa9cc] text-xs leading-[13px] [writing-mode:vertical-rl]">终端</span>
      </div>
      <div className="flex min-w-0 flex-1 flex-col border-t border-l border-[#999] bg-white text-xs">
        <table className="w-full table-fixed border-collapse whitespace-nowrap">
          <colgroup>
            <col className="w-[115px]" />
            <col className="w-[160px]" />
            <col className="w-[80px]" />
            <col className="w-[62px]" />
            <col className="w-[80px]" />
            <col className="w-[89px]" />
            <col className="w-[89px]" />
            <col className="w-[89px]" />
            <col className="w-[89px]" />
            <col className="w-[89px]" />
            <col className="w-[89px]" />
            <col className="w-[133px]" />
            <col />
          </colgroup>
          <thead>
            <tr className="h-[25px] border-b border-[#c4c4c4] bg-linear-to-b from-white to-[#f0f0f2]">
              <th className="border-r border-[#ddd] pl-[6px] text-left font-normal">
                订单<span className="ml-3 text-[10px] text-[#555]">/</span>
              </th>
              {orderHead.map((h, i) => <th key={i} className={th}>{h}</th>)}
              <th className={th}>获利</th>
              <th className="pr-[6px] text-right font-normal">注释</th>
            </tr>
          </thead>
          <tbody>
            {orders.map((o) => (
              <tr key={o[0]} className="h-[21px] border-b border-[#c4c4c4] even:bg-[#ebebeb]">
                <td className="border-r border-[#c4c4c4] pl-[2px]">
                  <span className="flex items-center gap-[5px]"><OrderIcon sell={o[2] === "sell"} />{o[0]}</span>
                </td>
                {o.slice(1, 11).map((v, i) => <td key={i} className={td}>{v}</td>)}
                <td className="border-r border-[#c4c4c4] pr-[5px]">
                  <span className="flex items-center justify-end gap-[9px]">
                    {o[11]}
                    <button type="button" aria-label={`close ${o[0]}`}>
                      <svg width="9" height="9" viewBox="0 0 9 9" aria-hidden="true"><path d="M1 1l7 7M8 1L1 8" stroke="#8c8c8c" strokeWidth="1.800" /></svg>
                    </button>
                  </span>
                </td>
                <td className="pr-1 text-right">微信：JFK-AI</td>
              </tr>
            ))}
          </tbody>
          <tfoot>
            <tr className="h-[21px] bg-[#c8c8c8] font-bold">
              <td colSpan={11} className="pl-[3px]">
                <span className="flex items-center gap-[10px]">
                  <span className="-mr-[3px] flex h-[14px] w-3 items-center justify-center border border-[#888] bg-white"><DirArrow up={false} /></span>
                  <span>余额: 23 690.70 USD</span>
                  <span>净值: 23 680.58</span>
                  <span>已用预付款: 28.67</span>
                  <span>可用预付款: 23 651.91</span>
                  <span>预付款比例: 82591.62%</span>
                </span>
              </td>
              <td className="pr-6 text-right">-10.12</td>
              <td />
            </tr>
          </tfoot>
        </table>
        <div className="mt-auto flex h-[27px] border-t border-black bg-[#efefef] text-[#777]">
          {terminalTabs.map(([t, n], i) => (
            <div key={t} className="flex h-[22px]">
              <button
                type="button"
                className={clsx(
                  "whitespace-nowrap",
                  i === 0 ? "ml-[2px] -translate-y-px border border-t-0 border-black bg-white px-[9px] text-black" : "px-[10px]",
                )}
              >
                {t}
                {n && <span className="relative top-1 ml-[2px] text-[10px] text-[#e02020]">{n}</span>}
              </button>
              {i > 0 && <span className="my-1 -ml-px w-px bg-[#777]" />}
            </div>
          ))}
        </div>
      </div>
      <div className={clsx("pointer-events-none absolute right-[3px] bottom-1 flex items-center text-[38px] leading-[44px] font-light whitespace-nowrap text-white [text-shadow:1px_1px_1px_#555]", ARIAL)}>
        <svg width="40" height="44" viewBox="0 0 40 44" fill="none" aria-hidden="true">
          <path d="M3 31c5-1 4-7 6-13C11 10 15 5 22 7M1 19h14" stroke="#333" strokeWidth="3" transform="translate(1 1)" />
          <path d="M16 19h16c0 9-5 13-12 14-3 1-5 4-9 8" stroke="#222" strokeWidth="3" transform="translate(1 1)" />
          <path d="M3 31c5-1 4-7 6-13C11 10 15 5 22 7M1 19h14" stroke="#fff" strokeWidth="3" />
          <path d="M16 19h16c0 9-5 13-12 14-3 1-5 4-9 8" stroke="#fff" strokeWidth="3" />
        </svg>
        @金富凯 AI
      </div>
    </section>
  );
}

/* ---------- window ---------- */

function StatusBar() {
  return (
    <footer className="flex h-[13px] shrink-0 overflow-hidden bg-[#efefef] pt-[5px] text-xs leading-4">
      <span className="min-w-0 flex-1 pl-[3px] whitespace-nowrap">寻求帮助,请按F1键</span>
      <span className="w-[251px] border-l border-[#999] pl-1">Default</span>
      <span className="w-[82px] border-l border-[#999]" />
      <span className="w-[81px] border-l border-[#999]" />
      <span className="w-[78px] border-l border-[#999]" />
      <span className="w-[80px] border-l border-[#999]" />
      <span className="w-[78px] border-l border-[#999]" />
      <span className="flex w-[162px] gap-1 border-l border-[#999] pl-[5px]">
        <span className="h-3 w-[23px] bg-[repeating-linear-gradient(90deg,#4f7d22_0_3px,transparent_3px_4px)]" />
        1340/5 kb
      </span>
    </footer>
  );
}

const task = "flex h-8 w-40 shrink-0 items-start border border-[#8a96a6] bg-linear-to-b from-[#9aa6b4] to-[#2c3644] text-xs text-white";

function Taskbar() {
  return (
    <nav className="flex h-[19px] shrink-0 overflow-hidden border-t border-[#0c141e] bg-linear-to-b from-[#7d97b5] to-[#16202e]">
      <button type="button" aria-label="start" className="flex w-[43px] shrink-0 items-start bg-[#2a3a50] pt-2">
        <svg width="26" height="12" viewBox="0 0 26 12" aria-hidden="true">
          <path d="M0 4h25v8H0z" fill="#2f7fc4" />
          <path d="M12 3h5v3h-5zM18 3h5v3h-5zM12 8h11v2H12z" fill="#d6ecff" />
          <circle cx="4" cy="5" r="4" fill="#f2a33a" />
        </svg>
      </button>
      <button type="button" className={clsx(task, "mr-[2px] gap-1 pl-2")}>
        <span className="mt-[3px]"><ALogo size={32} /></span>
        <span className="mt-[9px] whitespace-nowrap">8004832: DooPr...</span>
      </button>
      {[0, 1, 2].map((i) => (
        <button key={i} type="button" className={clsx(task, "gap-2 pl-2")}>
          <span className="mt-[5px]"><WeChat /></span>
          <span className="mt-[9px]">微信</span>
        </button>
      ))}
      <span className="mr-[24px] ml-auto flex items-start gap-2 pt-[11px]">
        <svg width="150" height="12" viewBox="0 0 150 12" aria-hidden="true">
          <path d="M16 4h14v8H16z" fill="#ccc" stroke="#555" />
          <path d="M18 6h10M18 9h10" stroke="#333" strokeDasharray="2 1" />
          <circle cx="54" cy="8" r="7" fill="#8fd06a" stroke="#fff" />
          <rect x="71" y="1" width="14" height="14" rx="2" fill="#e8452a" />
          <path d="M75 4l7 4-7 4z" fill="#fff" />
          {[102, 125, 148].map((x) => (
            <g key={x}>
              <ellipse cx={x - 1} cy="7" rx="5" ry="6" fill="#111" />
              <circle cx={x - 3} cy="5" r="1.500" fill="#fff" />
              <circle cx={x + 1} cy="5" r="1.500" fill="#fff" />
              <ellipse cx={x - 1} cy="9" rx="3" ry="1.500" fill="#f2a33a" />
            </g>
          ))}
        </svg>
      </span>
    </nav>
  );
}

function TitleBar() {
  return (
    <header className="relative flex h-[29px] shrink-0 items-center bg-[linear-gradient(90deg,#b08c7c_0,#8295aa_3%,#8193a8_8%,#a8c4da_10%,#6d8aa5_14%,#7fa8c8_18%,#4b8cb8_22%,#3f84b2_66%,#2a4a66_68%,#141e2c_69%,#22384e_70%,#4584ae_72%,#4a88b4_90%,#8ab4d4_100%)] pl-2 shadow-[inset_0_2px_0_#0c1a2a,inset_0_3px_0_#9fc4e0,inset_0_-1px_0_#2c4a66,inset_0_-4px_3px_#9cc8e6]">
      <ALogo size={16} />
      <h1 className="pl-[5px] text-xs whitespace-nowrap text-black">8004832: DooPrime-Live 2 - [XAUUSD.s,H1]</h1>
      <div className="absolute top-0 right-[7px] flex h-5 overflow-hidden rounded-b border border-[#2b3c50] text-white">
        <button type="button" aria-label="minimize" className="flex w-7 items-center justify-center bg-linear-to-b from-[#b4cbe0] via-[#5f7f9e] to-[#84a8c8]">
          <span className="mt-1 h-[3px] w-[11px] bg-white shadow-[0_0_1px_1px_#445]" />
        </button>
        <button type="button" aria-label="maximize" className="flex w-7 items-center justify-center border-x border-[#2b3c50] bg-linear-to-b from-[#b4cbe0] via-[#5f7f9e] to-[#84a8c8]">
          <span className="h-2 w-[10px] border-2 border-white shadow-[0_0_1px_1px_#445]" />
        </button>
        <button type="button" aria-label="close window" className="flex w-[46px] items-center justify-center bg-linear-to-b from-[#e09a88] via-[#b9311c] to-[#d2644a]">
          <svg width="11" height="10" viewBox="0 0 11 10" aria-hidden="true"><path d="M2 1l7 8M9 1L2 9" stroke="#fff" strokeWidth="2.500" /></svg>
        </button>
      </div>
    </header>
  );
}

function MenuBar() {
  const child = "flex h-[17px] w-[17px] items-center justify-center border border-[#9db4cc] bg-[#e4eef8]";
  return (
    <nav className="flex h-[22px] shrink-0 items-center gap-px bg-[#efefef] pr-[2px] pl-1 text-xs">
      <svg width="14" height="14" viewBox="0 0 14 14" fill="none" aria-hidden="true">
        <rect x=".5" y=".5" width="9" height="8" fill="#fff" stroke="#5b9bd0" />
        <rect x="3.500" y="4.500" width="10" height="9" fill="#fff" stroke="#5b9bd0" />
        <path d="M1 2h8M4 6h9" stroke="#5b9bd0" />
        <path d="M5 12l2-4 2 3 3-4" stroke="#5b9bd0" />
      </svg>
      {menus.map(([name, key]) => (
        <button key={key} type="button" className="px-[9px] whitespace-nowrap">
          {name}(<u>{key}</u>)
        </button>
      ))}
      <span className="ml-auto flex gap-[2px]">
        <button type="button" aria-label="minimize chart" className={child}><span className="mt-[6px] h-[2px] w-[6px] bg-[#5f7890]" /></button>
        <button type="button" aria-label="restore chart" className={child}>
          <svg width="9" height="9" viewBox="0 0 9 9" fill="none" aria-hidden="true"><path d="M3 3V1h5v4H6M1 4h5v4H1z" stroke="#5f7890" strokeWidth="1.300" /></svg>
        </button>
        <button type="button" aria-label="close chart" className={child}>
          <svg width="8" height="8" viewBox="0 0 8 8" aria-hidden="true"><path d="M1 1l6 6M7 1L1 7" stroke="#5f7890" strokeWidth="1.800" /></svg>
        </button>
      </span>
    </nav>
  );
}

export default function App() {
  return (
    <div className={clsx("flex h-screen flex-col overflow-hidden bg-[#16202e] text-black", UI)}>
      <TitleBar />
      <div className="flex min-h-0 flex-1">
        <div className="w-2 shrink-0 border-r border-[#2c3c4c] bg-[linear-gradient(#9a8a86_0,#9db4c8_5%,#b8cfe4_16%,#86a8c8_24%,#3f678c_30%,#7ea2c2_40%,#1a2530_44%,#24343e_50%,#3f7468_54%,#141b24_58%,#18202a_90%,#5f7a94_95%,#2a3a4a_100%)]" />
        <div className="flex min-w-0 flex-1 flex-col">
          <MenuBar />
          <Toolbar />
          <div className="flex min-h-0 flex-1">
            <LeftColumn />
            <Chart />
          </div>
          <Terminal />
          <StatusBar />
        </div>
        <div className="w-[10px] shrink-0 border-x-2 border-l-[#dfe8f2] border-r-[#26384c] bg-[linear-gradient(#7fa4c6_0,#a9bcd4_10%,#c4cad6_25%,#1a1c24_26%,#1c2c3c_29%,#4a80aa_34%,#35618a_40%,#1a2c3e_47%,#233a50_60%,#172432_100%)]" />
      </div>
      <Taskbar />
    </div>
  );
}
